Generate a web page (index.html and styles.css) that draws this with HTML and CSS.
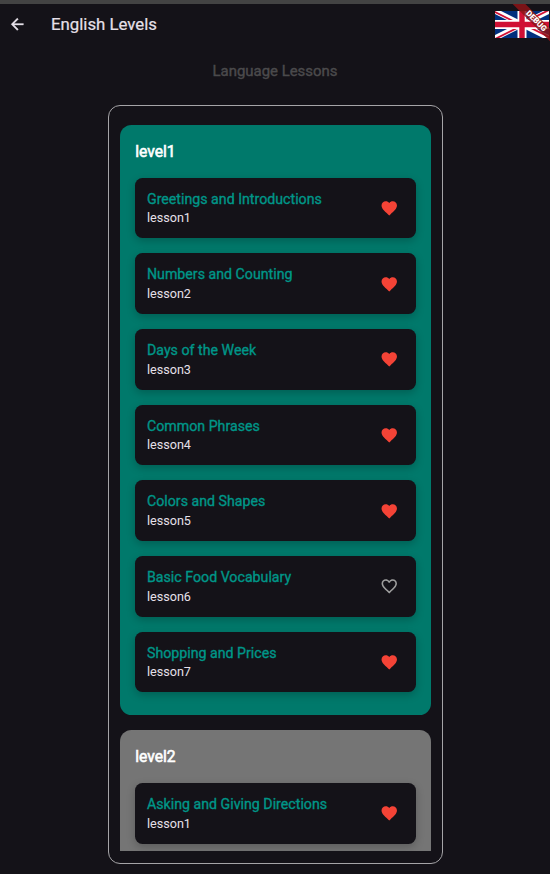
FILE: index.html
```html
<!DOCTYPE html>
<html lang="en">
<head>
<meta charset="utf-8">
<title>English Levels</title>
<link rel="stylesheet" href="styles.css">
</head>
<body>
<svg class="defs" aria-hidden="true">
  <symbol id="heart" viewBox="0 0 24 24"><path d="M12 21.35l-1.45-1.32C5.4 15.36 2 12.28 2 8.5 2 5.42 4.42 3 7.5 3c1.74 0 3.41.81 4.5 2.09C13.09 3.81 14.76 3 16.5 3 19.58 3 22 5.42 22 8.5c0 3.78-3.4 6.86-8.55 11.54L12 21.35z"/></symbol>
  <symbol id="heart-outline" viewBox="0 0 24 24"><path d="M16.5 3c-1.74 0-3.41.81-4.5 2.09C10.91 3.81 9.24 3 7.5 3 4.42 3 2 5.42 2 8.5c0 3.78 3.4 6.86 8.55 11.54L12 21.35l1.45-1.32C18.6 15.36 22 12.28 22 8.5 22 5.42 19.58 3 16.5 3zm-4.4 15.55l-.1.1-.1-.1C7.14 14.24 4 11.39 4 8.5 4 6.5 5.5 5 7.5 5c1.54 0 3.04.99 3.57 2.36h1.87C13.46 5.99 14.96 5 16.5 5c2 0 3.5 1.5 3.5 3.5 0 2.89-3.14 5.74-7.9 10.05z"/></symbol>
</svg>
<header class="bar">
  <svg class="back" viewBox="0 0 24 24"><path d="M20 11H7.83l5.59-5.59L12 4l-8 8 8 8 1.41-1.41L7.83 13H20v-2z"/></svg>
  <h1 class="title">English Levels</h1>
  <svg class="flag" viewBox="0 0 60 30" preserveAspectRatio="none">
    <path fill="#012f7d" d="M0 0h60v30H0z"/>
    <path stroke="#fff" stroke-width="6" d="M0 0l60 30M60 0L0 30"/>
    <path fill="#d01034" d="M0 0l30 15h-4.5L0 2.2zM60 0L30 15h-4.5L55.5 0zM0 30l30-15h4.5L4.5 30zM60 30L30 15h4.5L60 27.8z"/>
    <path stroke="#fff" stroke-width="10" d="M30 0v30M0 15h60"/>
    <path stroke="#d01034" stroke-width="6" d="M30 0v30M0 15h60"/>
  </svg>
</header>
<svg class="debug" viewBox="0 0 44 44">
  <path d="M6.7 0H19.4L44 24.6V37.3z"/>
  <text transform="translate(30.6 16.8) rotate(45)" text-anchor="middle" y="2.8">DEBUG</text>
</svg>
<h2 class="subtitle">Language Lessons</h2>
<main class="frame">
  <div class="scroll">
    <section class="level">
      <h3 class="name">level1</h3>
      <article class="card"><div><h4 class="topic">Greetings and Introductions</h4><p class="lesson">lesson1</p></div><svg class="fav"><use href="#heart"/></svg></article>
      <article class="card"><div><h4 class="topic">Numbers and Counting</h4><p class="lesson">lesson2</p></div><svg class="fav"><use href="#heart"/></svg></article>
      <article class="card"><div><h4 class="topic">Days of the Week</h4><p class="lesson">lesson3</p></div><svg class="fav"><use href="#heart"/></svg></article>
      <article class="card"><div><h4 class="topic">Common Phrases</h4><p class="lesson">lesson4</p></div><svg class="fav"><use href="#heart"/></svg></article>
      <article class="card"><div><h4 class="topic">Colors and Shapes</h4><p class="lesson">lesson5</p></div><svg class="fav"><use href="#heart"/></svg></article>
      <article class="card"><div><h4 class="topic">Basic Food Vocabulary</h4><p class="lesson">lesson6</p></div><svg class="fav off"><use href="#heart-outline"/></svg></article>
      <article class="card"><div><h4 class="topic">Shopping and Prices</h4><p class="lesson">lesson7</p></div><svg class="fav"><use href="#heart"/></svg></article>
    </section>
    <section class="level locked">
      <h3 class="name">level2</h3>
      <article class="card"><div><h4 class="topic">Asking and Giving Directions</h4><p class="lesson">lesson1</p></div><svg class="fav"><use href="#heart"/></svg></article>
    </section>
  </div>
</main>
</body>
</html>
```
FILE: styles.css
```css
* { box-sizing: border-box; margin: 0; padding: 0; }
body {
  width: 550px;
  height: 874px;
  overflow: hidden;
  display: flex;
  flex-direction: column;
  background: #141218;
  border-top: 4px solid #434343;
  font-family: Roboto, "Liberation Sans", sans-serif;
}
.defs { position: absolute; width: 0; height: 0; }
.bar { height: 42px; flex: none; display: flex; align-items: center; padding: 0 1px 0 8px; }
.back { width: 18.5px; height: 18.5px; margin-bottom: 1px; fill: #e6e0e9; stroke: #e6e0e9; stroke-width: .4; }
.title { flex: 1; margin: 0 0 2px 24.5px; font-size: 16.8px; font-weight: 400; line-height: 22px; color: #e6e0e9; -webkit-text-stroke: .2px; }
.flag { width: 54px; height: 27px; margin-bottom: 1px; }
.debug { position: absolute; right: 0; top: 4px; width: 44px; height: 44px; }
.debug path { fill: rgba(140, 20, 24, .85); }
.debug text { fill: #fff; font-size: 8px; font-weight: 900; }
.subtitle {
  flex: none;
  height: 59px;
  padding-top: 15px;
  text-align: center;
  font-size: 14.95px;
  font-weight: 400;
  line-height: 20px;
  color: #4b4a4c;
  -webkit-text-stroke: .4px;
}
.frame {
  flex: none;
  width: 335px;
  height: 759px;
  margin-left: 108px;
  padding: 18.8px 11px 12px;
  border: 1px solid #a5a4a7;
  border-radius: 12px;
}
.scroll { height: 726.2px; overflow: hidden; }
.level {
  margin-bottom: 15.3px;
  padding: 15px 15.3px 7.5px;
  border-radius: 11.5px;
  background: #00796b;
}
.locked { background: #757575; }
.name { height: 37.9px; padding-top: 1.1px; font-size: 15.6px; font-weight: 400; line-height: 22px; color: #fff; -webkit-text-stroke: .6px; }
.card {
  display: flex;
  align-items: center;
  justify-content: space-between;
  height: 60.5px;
  margin-bottom: 15.2px;
  padding: 0 17.4px 0 11.7px;
  border-radius: 7.5px;
  background: #141218;
  box-shadow: 0 3px 8px rgba(0, 0, 0, .22);
}
.topic { padding-top: .8px; font-size: 14.2px; font-weight: 400; line-height: 19.6px; color: #009688; -webkit-text-stroke: .35px; }
.lesson { font-size: 12.6px; font-weight: 400; line-height: 18px; color: #e6e0e9; }
.fav { width: 18.5px; height: 18.5px; margin-top: .6px; fill: #f44336; }
.off { fill: #9e9e9e; }
```
